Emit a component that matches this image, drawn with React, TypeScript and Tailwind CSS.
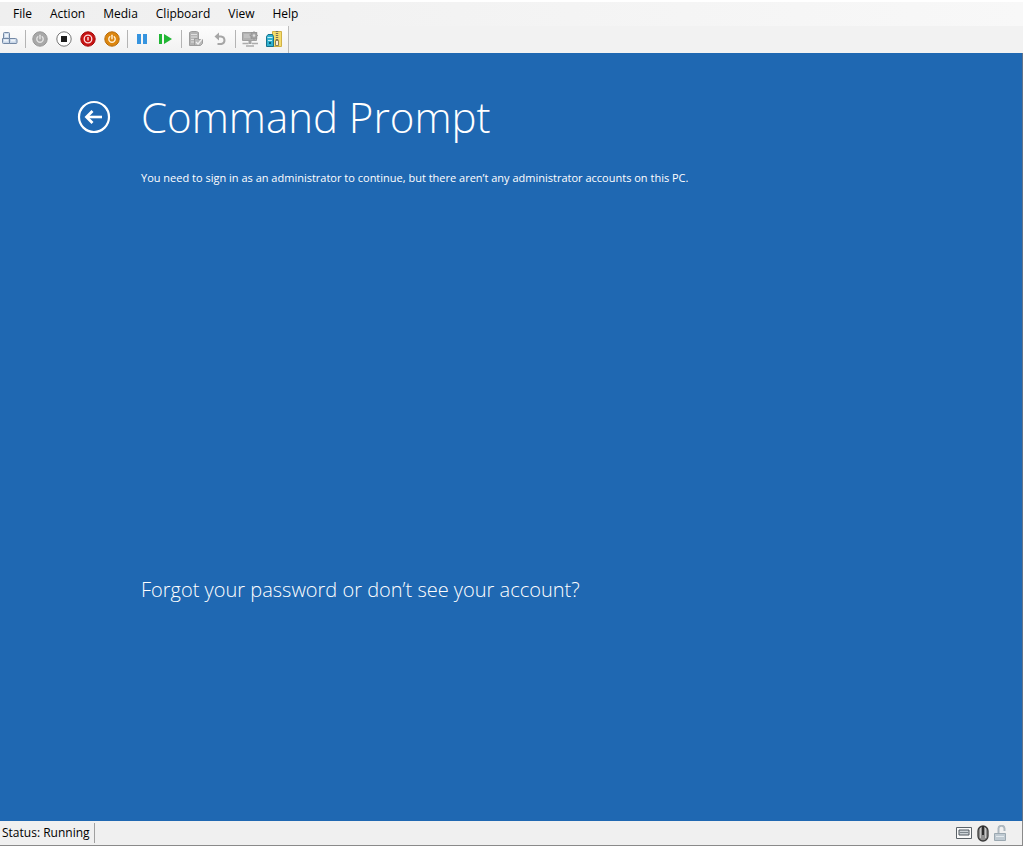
import type { ReactNode } from "react";

const menus = ["File", "Action", "Media", "Clipboard", "View", "Help"];

function Round({ ring, fill, children }: { ring: string; fill: string; children: ReactNode }) {
  return (
    <svg width="16" height="16" viewBox="0 0 16 16" fill="none" aria-hidden="true">
      <circle cx="8" cy="8" r="7.2" fill={fill} stroke={ring} strokeWidth="1" />
      {children}
    </svg>
  );
}

function PowerMark({ color }: { color: string }) {
  return (
    <g stroke={color} strokeWidth="1.4" strokeLinecap="round">
      <path d="M5.8 5.8a3.2 3.2 0 1 0 4.4 0" />
      <path d="M8 4.2v3.6" />
    </g>
  );
}

function KeysIcon() {
  return (
    <svg width="16" height="16" viewBox="0 0 16 16" aria-hidden="true">
      <g fill="#c9d7e8" stroke="#7388a5" strokeWidth="1">
        <path d="M1.500 2.500q0-1 1-1h4q1 0 1 1v5h-6z" />
        <path d="M.5 7.500h7v5h-6q-1 0-1-1z" />
        <path d="M7.500 7.500h6q1.500 0 1.500 1.500v2.500q0 1-1 1H7.500z" />
      </g>
      <path d="M3 3h3v3H3zM2 8.500h4v2H2zM9 8.500h4v2H9z" fill="#edf3f9" />
    </svg>
  );
}

function CheckpointIcon() {
  return (
    <svg width="16" height="16" viewBox="0 0 16 16" aria-hidden="true">
      <path d="M1.500 1.500l2-1h5l2 1v13h-9z" fill="#b3b3b3" stroke="#9c9c9c" />
      <path d="M3 3.500h6M3 6h6M3 8.500h3M3 11h3" stroke="#e0e0e0" />
      <path d="M6.500 7.500h3l1 1h4v4l-2 2h-6z" fill="#b9b9b9" stroke="#9c9c9c" />
      <path d="M8 11l2 2 4-5" fill="none" stroke="#efefef" strokeWidth="1.300" />
    </svg>
  );
}

function EnhancedIcon() {
  return (
    <svg width="18" height="16" viewBox="0 0 18 16" aria-hidden="true">
      <path d="M1.500 1.500h14v8h-14z" fill="#b2b2b2" stroke="#a0a0a0" />
      <path d="M3 4h5M3 6h6" stroke="#d0d0d0" />
      <path d="M9 10v3" stroke="#a3a3a3" strokeWidth="3" />
      <path d="M1.500 12.500h6M11 12.500h6M5 15h8" stroke="#ababab" strokeWidth="1.600" />
      <path d="M13 .5l1 1.500 2-.5-.5 2L17 4.500l-1.500 1 .5 2-2-.5-1 1.500L12 7l-2 .5.500-2L9 4.500l1.500-1-.5-2 2 .5z" fill="#a6a6a6" stroke="#929292" strokeWidth=".8" />
      <circle cx="13" cy="4.500" r="1.200" fill="#dedede" />
    </svg>
  );
}

function ShareIcon() {
  return (
    <svg width="18" height="18" viewBox="0 0 18 18" aria-hidden="true">
      <path d="M7.500 1.500h9v15h-9z" fill="#f5dc6c" stroke="#d0b146" />
      <path d="M12 1v10" stroke="#7a7055" strokeWidth="2.400" strokeDasharray="1 1" />
      <path d="M10.500 10.500h3v5h-3z" fill="#f4efe0" stroke="#776a3c" strokeWidth=".8" />
      <path d="M1.500 6.500l1.500-2h4.500l1 2v10h-7z" fill="#31b1cf" stroke="#17718d" />
      <path d="M2.500 7.500h5M3 10.500h4" stroke="#c2f0f7" />
      <path d="M4 12h2v2H4z" fill="#0d617b" />
    </svg>
  );
}

function ToolButton({ label, disabled, children }: { label: string; disabled?: boolean; children: ReactNode }) {
  return (
    <button type="button" aria-label={label} disabled={disabled} className="flex h-6 w-6 items-center justify-center">
      {children}
    </button>
  );
}

function Separator() {
  return <span className="mr-0.5 ml-[3px] h-[18px] w-px bg-[#b4b4b4]" />;
}

export default function App() {
  return (
    <div className="flex min-h-screen flex-col border-y border-white bg-[#f0f0f0] font-['Open_Sans','Noto_Sans',sans-serif] text-xs text-black">
      <nav aria-label="Main menu" className="flex h-[25px] items-center gap-[18px] border-t border-white bg-linear-to-r from-[#efefef] to-[#f8f8f8] pl-[13px]">
        {menus.map((name) => (
          <button key={name} type="button">{name}</button>
        ))}
      </nav>
      <div className="flex h-[27px] items-center bg-[#f2f2f2]">
        <div className="-ml-0.5 flex h-full items-center border-r border-[#bcbcbc] bg-linear-to-b from-[#fdfdfd] to-[#f1f1f1] pr-0.5 pb-0.5">
          <ToolButton label="Ctrl+Alt+Delete"><KeysIcon /></ToolButton>
          <Separator />
          <ToolButton label="Start" disabled>
            <Round ring="#969696" fill="#a8a8a8"><PowerMark color="#e3e3e3" /></Round>
          </ToolButton>
          <ToolButton label="Turn off">
            <Round ring="#777777" fill="#ffffff"><path d="M5 5h6v6H5z" fill="#1c1c1c" /></Round>
          </ToolButton>
          <ToolButton label="Shut down">
            <Round ring="#a10c0c" fill="#c81414">
              <circle cx="8" cy="8" r="3.800" stroke="#ffe3e3" strokeWidth="1.300" />
              <path d="M8 6v3.500" stroke="#ffe3e3" strokeWidth="1.400" />
            </Round>
          </ToolButton>
          <ToolButton label="Save">
            <Round ring="#b76c0c" fill="#dc860f"><PowerMark color="#fff1d9" /></Round>
          </ToolButton>
          <Separator />
          <ToolButton label="Pause">
            <svg width="10" height="10" viewBox="0 0 10 10" aria-hidden="true"><path d="M0 0h4v10H0zM6 0h4v10H6z" fill="#3694df" /></svg>
          </ToolButton>
          <ToolButton label="Reset">
            <svg width="14" height="10" viewBox="0 0 14 10" aria-hidden="true"><path d="M0 0h3v10H0zM5 0l8 5-8 5z" fill="#20b634" /></svg>
          </ToolButton>
          <Separator />
          <ToolButton label="Checkpoint" disabled><CheckpointIcon /></ToolButton>
          <ToolButton label="Revert" disabled>
            <svg width="14" height="14" viewBox="0 0 14 14" fill="none" aria-hidden="true">
              <path d="M4 4.500h4a3.800 3.800 0 0 1 .5 7.500H4.500" stroke="#a6a6a6" strokeWidth="2" />
              <path d="M6 .5v8L1.500 4.500z" fill="#a6a6a6" />
            </svg>
          </ToolButton>
          <Separator />
          <ToolButton label="Enhanced session" disabled><EnhancedIcon /></ToolButton>
          <ToolButton label="Share"><ShareIcon /></ToolButton>
        </div>
      </div>
      <main className="flex grow flex-col border-r border-[#62738a] bg-[#1f68b2] pl-[77px] text-white">
        <header className="flex items-center gap-[30px] pt-8">
          <button type="button" aria-label="Back" className="shrink-0">
            <svg width="34" height="34" viewBox="0 0 34 34" fill="none" stroke="currentColor" aria-hidden="true">
              <circle cx="17" cy="17" r="15" strokeWidth="2.200" />
              <path d="M25 17H10" strokeWidth="2.600" />
              <path d="M15.500 11L9.500 17l6 6" strokeWidth="2.800" />
            </svg>
          </button>
          <h1 className="text-[42px] leading-16 font-light">Command Prompt</h1>
        </header>
        <p className="mt-5 pl-16 text-[11px] leading-[18px]">
          You need to sign in as an administrator to continue, but there aren’t any administrator accounts on this PC.
        </p>
        <a href="#account-help" className="mt-auto mb-[215px] ml-16 self-start text-xl leading-8 font-light">
          Forgot your password or don’t see your account?
        </a>
      </main>
      <footer className="flex h-[25px] items-center justify-between border-r border-b border-[#8a8a8a] bg-[#f0f0f0] pr-[14px]">
        <span className="flex h-5 items-center border-r border-[#a0a0a0] pr-1 pl-0.5">Status: Running</span>
        <div className="flex items-center gap-[5px]">
          <svg width="16" height="14" viewBox="0 0 16 14" aria-hidden="true">
            <path d="M.5 1.500h15v11H.5z" fill="#fafafa" stroke="#5b6268" />
            <path d="M3 4h10v5H3z" fill="#cdd3d7" stroke="#4f575e" />
            <path d="M4 6.500h8" stroke="#7d868d" />
          </svg>
          <svg width="12" height="17" viewBox="0 0 12 17" aria-hidden="true">
            <rect x="1" y="1" width="10" height="15" rx="5" fill="#8e8e8e" stroke="#393939" strokeWidth="1.300" />
            <path d="M3.500 3v10M8.500 3v10" stroke="#c7c7c7" />
            <path d="M6 1v9" stroke="#2c2c2c" strokeWidth="2" />
          </svg>
          <svg width="14" height="17" viewBox="0 0 14 17" aria-hidden="true">
            <path d="M4.500 8V4a3 3 0 0 1 6-.5V6" fill="none" stroke="#aeb8bf" strokeWidth="2" />
            <path d="M.5 8.500h11v7H.5z" fill="#bfcad2" stroke="#9ba8b1" />
            <path d="M2 11.500h8" stroke="#e4eaee" />
          </svg>
        </div>
      </footer>
    </div>
  );
}
